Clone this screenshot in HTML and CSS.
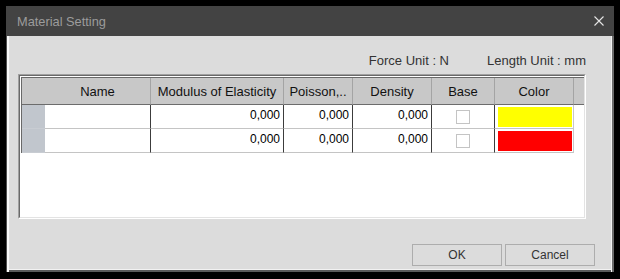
FILE: index.html
```html
<!DOCTYPE html>
<html>
<head>
<meta charset="utf-8">
<link rel="stylesheet" href="styles.css">
</head>
<body>
<div class="dialog">
  <div class="titlebar">
    <span class="title">Material Setting</span>
    <svg class="close" width="10" height="10" viewBox="0 0 10 10"><path d="M0.5 0.5 L9.5 9.5 M9.5 0.5 L0.5 9.5" stroke="#e6e6e6" stroke-width="1.1" fill="none"/></svg>
  </div>
  <div class="body">
    <div class="units"><span>Force Unit : N</span><span>Length Unit : mm</span></div>
    <div class="panel">
      <div class="panel-inner">
        <div class="grid">
          <div class="hd corner"></div>
          <div class="hd">Name</div>
          <div class="hd">Modulus of Elasticity</div>
          <div class="hd">Poisson,..</div>
          <div class="hd">Density</div>
          <div class="hd">Base</div>
          <div class="hd">Color</div>
          <div class="hd filler"></div>

          <div class="rh"></div>
          <div class="cell"></div>
          <div class="cell num">0,000</div>
          <div class="cell num">0,000</div>
          <div class="cell num">0,000</div>
          <div class="cell center"><span class="chk"></span></div>
          <div class="cell color"><span class="swatch yellow"></span></div>
          <div class="blank"></div>

          <div class="rh"></div>
          <div class="cell"></div>
          <div class="cell num">0,000</div>
          <div class="cell num">0,000</div>
          <div class="cell num">0,000</div>
          <div class="cell center"><span class="chk"></span></div>
          <div class="cell color"><span class="swatch red"></span></div>
          <div class="blank"></div>
        </div>
      </div>
    </div>
    <div class="buttons">
      <button class="btn">OK</button>
      <button class="btn">Cancel</button>
    </div>
  </div>
</div>
</body>
</html>
```

FILE: styles.css
```css
html, body {
  margin: 0;
  padding: 0;
  background: #000;
}
body {
  font-family: "Liberation Sans", Arial, sans-serif;
  font-size: 12px;
}
.dialog {
  margin: 6px 0 0 6px;
  width: 608px;
  height: 266px;
}
.titlebar {
  height: 30px;
  background: #434343;
  display: flex;
  align-items: center;
  justify-content: space-between;
  padding: 0 11px 0 11px;
}
.title {
  color: #9c9c9c;
  font-size: 12.8px;
  line-height: 30px;
  padding-top: 1px;
}
.close {
  display: block;
  margin-right: -1px;
}
.body {
  height: 236px;
  background: #dcdcdc;
  display: flex;
  flex-direction: column;
  box-shadow: inset 1px 0 #505050, inset 3px 0 #f8f8f8,
              inset -2px 0 #6c6c6c, inset -3px 0 #f2f2f2,
              inset 0 -2px #5a5a5a, inset 0 -3px #f2f2f2;
}
.units {
  margin: 18px 28px 0 12px;
  height: 14px;
  line-height: 14px;
  display: flex;
  justify-content: flex-end;
  gap: 38px;
  color: #333;
  font-size: 13px;
}
.panel {
  margin: 6px 28px 0 12px;
  height: 145px;
  box-sizing: border-box;
  border: 1px solid;
  border-color: #a0a0a0 #fff #fff #a0a0a0;
}
.panel-inner {
  height: 100%;
  box-sizing: border-box;
  border: 1px solid;
  border-color: #696969 #e3e3e3 #e3e3e3 #696969;
  background: #fff;
  padding: 1px 0 0 1px;
}
.grid {
  display: grid;
  grid-template-columns: 23px 106px 133px 69px 79px 63px 79px 1fr;
  grid-template-rows: 27px 24px 24px;
  border-top: 1px solid #696969;
  border-left: 1px solid #696969;
}
.hd {
  background: #c8c8c8;
  border-right: 1px solid #a4a4a4;
  border-bottom: 1px solid #6c6c6c;
  display: flex;
  align-items: center;
  justify-content: center;
  color: #111;
  font-size: 13px;
  white-space: nowrap;
  overflow: hidden;
  padding-top: 1px;
  box-sizing: border-box;
}
.hd.corner,
.hd.filler {
  border-right: none;
}
.rh {
  background: #c1c6cd;
  border-bottom: 1px solid #c8ccd2;
}
.cell {
  background: #fff;
  border-right: 1px solid #3c3c3c;
  border-bottom: 1px solid #c4c4c4;
  box-sizing: border-box;
  display: flex;
  align-items: center;
  color: #000;
  font-size: 12px;
}
.cell.num {
  justify-content: flex-end;
  padding: 0 3px 3px 0;
}
.cell.center {
  justify-content: center;
}
.cell.color {
  border-right: 1px solid #c8c8c8;
  padding: 0 1px 0 3px;
}
.blank {
  background: #fff;
}
.chk {
  width: 14px;
  height: 14px;
  box-sizing: border-box;
  border: 1px solid #c4c4c4;
  background: #fff;
}
.swatch {
  display: block;
  width: 74px;
  height: 20px;
}
.swatch.yellow { background: #ffff00; }
.swatch.red { background: #ff0000; }
.buttons {
  margin: 25px 19px 0 0;
  display: flex;
  justify-content: flex-end;
  gap: 3px;
}
.btn {
  width: 90px;
  height: 22px;
  margin: 0;
  padding: 0;
  border: 1px solid #adadad;
  background: #dcdcdc;
  color: #333;
  font-family: "Liberation Sans", Arial, sans-serif;
  font-size: 12px;
}
```
